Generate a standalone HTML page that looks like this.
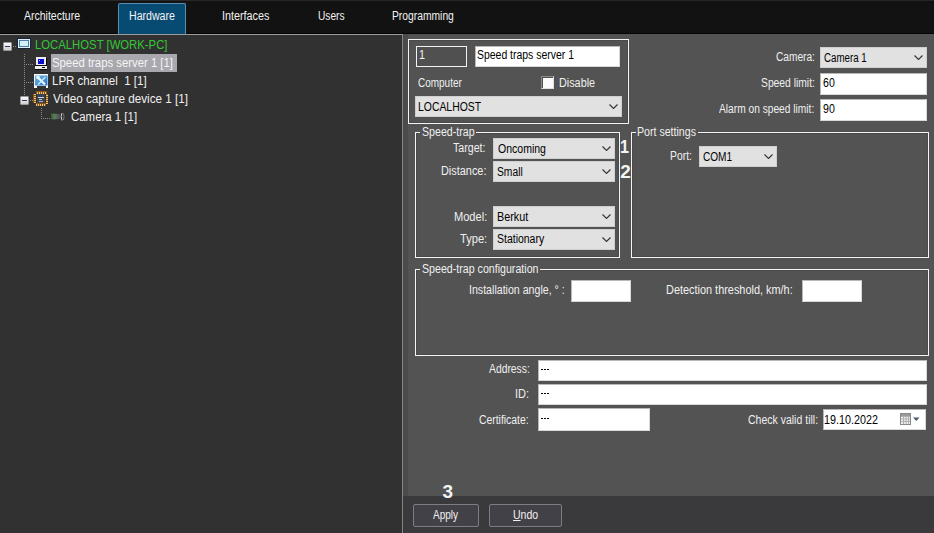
<!DOCTYPE html>
<html><head><meta charset="utf-8">
<style>
*{margin:0;padding:0;box-sizing:border-box}
html,body{width:934px;height:533px;overflow:hidden;background:#535353;font-family:"Liberation Sans",sans-serif;font-size:12px;color:#fff;position:relative}
.a{position:absolute}
.t{position:absolute;white-space:nowrap;line-height:14px;transform-origin:0 0}
.gb{position:absolute;border:1px solid #f4f4f4;box-shadow:inset 0 0 0 1px #4a4a4a}
.inp{position:absolute;background:#fff;border:1px solid;border-color:#b8b8b8 #d8d8d8 #d8d8d8 #b8b8b8}
.cmb{position:absolute;background:#e1e1e1;border:1px solid #cfcfcf}
.chev{position:absolute;width:9px;height:5px}
.gap{position:absolute;background:#535353;height:3px}
.btn{position:absolute;top:504px;height:23px;border:1px solid #7e7d83;background:#424147;border-radius:2px}
.dot{position:absolute;background-image:linear-gradient(#8c8c8c,#8c8c8c)}
.pm{position:absolute;width:9px;height:9px;border:1px solid #9a9a9a;background:linear-gradient(#fafafa,#cfcfcf);border-radius:1px}
.pm::after{content:"";position:absolute;left:1px;top:3px;width:5px;height:1px;background:#2a3a6a}
</style></head><body>
<!-- top bar -->
<div class="a" style="left:0;top:0;width:934px;height:34px;background:#121212"></div>
<div class="a" style="left:0;top:0;width:934px;height:1px;background:#262626"></div>
<div class="a" style="left:0;top:33px;width:934px;height:1px;background:#050505"></div>
<div class="a" style="left:118px;top:3px;width:68px;height:31px;background:#074a72;border:1px solid #5a8eb0;border-bottom:none;border-radius:2px 2px 0 0"></div>

<!-- left panel -->
<div class="a" style="left:0;top:34px;width:403px;height:499px;background:#313131;border-top:1px solid #9c9c9c;border-right:1px solid #858585"></div>
<div class="a" style="left:403px;top:34px;width:5px;height:462px;background:#4b4b4b"></div>

<!-- tree -->
<div class="a" style="left:51px;top:54px;width:126px;height:18px;background:#a9a8ae"></div>
<div class="pm" style="left:3px;top:42px"></div>
<div class="pm" style="left:20px;top:96px"></div>
<!-- dotted lines -->
<div class="a" style="left:13px;top:46px;width:4px;height:1px;background:repeating-linear-gradient(90deg,#8a8a8a 0 1px,transparent 1px 2px)"></div>
<div class="a" style="left:24px;top:54px;width:1px;height:41px;background:repeating-linear-gradient(#8a8a8a 0 1px,transparent 1px 2px)"></div>
<div class="a" style="left:26px;top:64px;width:8px;height:1px;background:repeating-linear-gradient(90deg,#8a8a8a 0 1px,transparent 1px 2px)"></div>
<div class="a" style="left:26px;top:82px;width:8px;height:1px;background:repeating-linear-gradient(90deg,#8a8a8a 0 1px,transparent 1px 2px)"></div>
<div class="a" style="left:30px;top:100px;width:4px;height:1px;background:repeating-linear-gradient(90deg,#8a8a8a 0 1px,transparent 1px 2px)"></div>
<div class="a" style="left:41px;top:108px;width:1px;height:11px;background:repeating-linear-gradient(#8a8a8a 0 1px,transparent 1px 2px)"></div>
<div class="a" style="left:43px;top:118px;width:8px;height:1px;background:repeating-linear-gradient(90deg,#8a8a8a 0 1px,transparent 1px 2px)"></div>
<!-- monitor icon -->
<svg class="a" style="left:17px;top:38px" width="14" height="11" viewBox="0 0 14 11" shape-rendering="crispEdges">
 <rect x="0" y="0" width="14" height="11" fill="#16243a"/>
 <rect x="1" y="1" width="12" height="9" fill="#e2f0fc"/>
 <rect x="2" y="2" width="10" height="7" fill="#4d7ea6"/>
 <rect x="3" y="3" width="8" height="5" fill="#d2f0fc"/>
</svg>
<!-- computer icon -->
<svg class="a" style="left:35px;top:57px" width="13" height="13" viewBox="0 0 13 13" shape-rendering="crispEdges">
 <rect x="1" y="0" width="10" height="8" fill="#ececf4"/>
 <rect x="3" y="2" width="6" height="5" fill="#0c0ccc"/>
 <rect x="3.5" y="2.5" width="1" height="1" fill="#c8c8ff"/>
 <rect x="11" y="1" width="1" height="7" fill="#0a0a0a"/>
 <rect x="0" y="8" width="12" height="1" fill="#0a0a0a"/>
 <rect x="0" y="9" width="12" height="3" fill="#eeeeea"/>
 <rect x="0" y="12" width="12" height="1" fill="#0a0a0a"/>
 <rect x="7" y="10" width="3" height="1" fill="#0a0a0a"/>
</svg>
<!-- LPR icon -->
<svg class="a" style="left:33px;top:73px" width="16" height="16" viewBox="0 0 16 16">
 <defs><linearGradient id="lg" x1="0" y1="0" x2="1" y2="1"><stop offset="0" stop-color="#6ab8f0"/><stop offset="1" stop-color="#2a70c0"/></linearGradient></defs>
 <rect x="1" y="1" width="14" height="14" fill="#f6f6f6"/>
 <rect x="2" y="2.5" width="12.5" height="10" fill="url(#lg)"/>
 <rect x="4" y="13" width="9" height="2" fill="#333"/>
 <path d="M5.5 5 L12 11.5" stroke="#eefaff" stroke-width="2.2"/>
 <circle cx="5" cy="4.5" r="1.8" fill="#eefaff"/>
 <path d="M12.5 4 L5 11.5" stroke="#c8f0ff" stroke-width="1.5"/>
</svg>
<!-- video chip icon -->
<svg class="a" style="left:33px;top:91px" width="16" height="16" viewBox="0 0 16 16" shape-rendering="crispEdges">
 <rect x="3" y="0" width="11" height="3" fill="#8a5410"/>
 <rect x="3" y="12" width="10" height="3" fill="#8a5410"/>
 <rect x="0" y="3" width="3" height="9" fill="#8a5410"/>
 <rect x="13" y="3" width="2" height="10" fill="#8a5410"/>
 <g fill="#e8c484">
  <rect x="4" y="1" width="1" height="2"/><rect x="6" y="1" width="1" height="2"/><rect x="8" y="1" width="1" height="2"/><rect x="10" y="1" width="1" height="2"/><rect x="12" y="1" width="1" height="2"/>
  <rect x="3" y="13" width="1" height="2"/><rect x="5" y="13" width="1" height="2"/><rect x="7" y="13" width="1" height="2"/><rect x="9" y="13" width="1" height="2"/><rect x="11" y="13" width="1" height="2"/>
  <rect x="1" y="3" width="2" height="1"/><rect x="1" y="5" width="2" height="1"/><rect x="1" y="7" width="2" height="1"/><rect x="1" y="9" width="2" height="1"/><rect x="1" y="11" width="2" height="1"/>
  <rect x="13" y="4" width="2" height="1"/><rect x="13" y="6" width="2" height="1"/><rect x="13" y="8" width="2" height="1"/><rect x="13" y="10" width="2" height="1"/><rect x="13" y="12" width="2" height="1"/>
 </g>
 <rect x="4" y="3" width="8" height="9" fill="#3c4454"/>
 <rect x="5" y="6" width="6" height="1" fill="#d0d4e0"/>
 <rect x="6" y="8" width="3" height="1" fill="#c0c4d0"/>
 <rect x="6" y="10" width="4" height="1" fill="#a8acb8"/>
</svg>
<!-- camera icon -->
<svg class="a" style="left:50px;top:112px" width="16" height="10" viewBox="0 0 16 10">
 <defs><linearGradient id="cg" x1="0" y1="0" x2="1" y2="0"><stop offset="0" stop-color="#3a5a3a"/><stop offset="0.4" stop-color="#5a805a"/><stop offset="1" stop-color="#4a4a58"/></linearGradient></defs>
 <path d="M1 1.5 L10 2 L10 7 L1 7.5 Z" fill="url(#cg)"/>
 <path d="M12 1 Q10.3 4.5 12 8.5" fill="none" stroke="#d8d8d8" stroke-width="1"/>
 <path d="M13.5 1.5 Q14.6 4.5 13.5 8" fill="none" stroke="#8a8a8a" stroke-width="0.8"/>
</svg>

<!-- bottom bar -->
<div class="a" style="left:403px;top:496px;width:531px;height:37px;background:#3a393c"></div>
<div class="btn" style="left:413px;width:66px"></div>
<div class="btn" style="left:489px;width:73px"></div>

<!-- top group -->
<div class="gb" style="left:408px;top:39px;width:221px;height:85px"></div>
<div class="a" style="left:416px;top:46px;width:51px;height:21px;border:1px solid #f2f2f2;background:#505050"></div>
<div class="inp" style="left:475px;top:46px;width:145px;height:21px"></div>
<div class="a" style="left:541px;top:76px;width:13px;height:13px;background:#fbfbfb;border-top:1px solid #8a8a8a;border-left:1px solid #8a8a8a;border-right:1px solid #e0e0e0;border-bottom:1px solid #e0e0e0;box-shadow:inset 1px 1px 0 #505050"></div>
<div class="cmb" style="left:415px;top:96px;width:207px;height:21px"></div>
<svg class="chev" style="left:609px;top:104px" viewBox="0 0 9 5"><path d="M0.5 0.5 L4.5 4.5 L8.5 0.5" stroke="#333" stroke-width="1.1" fill="none"/></svg>

<!-- right top -->
<div class="cmb" style="left:820px;top:47px;width:107px;height:21px"></div>
<svg class="chev" style="left:914px;top:55px" viewBox="0 0 9 5"><path d="M0.5 0.5 L4.5 4.5 L8.5 0.5" stroke="#333" stroke-width="1.1" fill="none"/></svg>
<div class="inp" style="left:820px;top:73px;width:107px;height:22px"></div>
<div class="inp" style="left:820px;top:99px;width:107px;height:22px"></div>

<!-- speed-trap group -->
<div class="gb" style="left:415px;top:132px;width:205px;height:126px"></div>
<div class="gap" style="left:420px;top:131px;width:56px"></div>
<div class="cmb" style="left:493px;top:138px;width:122px;height:21px"></div>
<div class="cmb" style="left:493px;top:161px;width:122px;height:21px"></div>
<div class="cmb" style="left:493px;top:206px;width:122px;height:21px"></div>
<div class="cmb" style="left:493px;top:229px;width:122px;height:21px"></div>
<svg class="chev" style="left:602px;top:146px" viewBox="0 0 9 5"><path d="M0.5 0.5 L4.5 4.5 L8.5 0.5" stroke="#333" stroke-width="1.1" fill="none"/></svg>
<svg class="chev" style="left:602px;top:169px" viewBox="0 0 9 5"><path d="M0.5 0.5 L4.5 4.5 L8.5 0.5" stroke="#333" stroke-width="1.1" fill="none"/></svg>
<svg class="chev" style="left:602px;top:214px" viewBox="0 0 9 5"><path d="M0.5 0.5 L4.5 4.5 L8.5 0.5" stroke="#333" stroke-width="1.1" fill="none"/></svg>
<svg class="chev" style="left:602px;top:237px" viewBox="0 0 9 5"><path d="M0.5 0.5 L4.5 4.5 L8.5 0.5" stroke="#333" stroke-width="1.1" fill="none"/></svg>

<!-- port settings -->
<div class="gb" style="left:631px;top:132px;width:298px;height:126px"></div>
<div class="gap" style="left:636px;top:131px;width:62px"></div>
<div class="cmb" style="left:699px;top:146px;width:78px;height:21px"></div>
<svg class="chev" style="left:764px;top:154px" viewBox="0 0 9 5"><path d="M0.5 0.5 L4.5 4.5 L8.5 0.5" stroke="#333" stroke-width="1.1" fill="none"/></svg>

<!-- config group -->
<div class="gb" style="left:415px;top:269px;width:514px;height:87px"></div>
<div class="gap" style="left:420px;top:268px;width:120px"></div>
<div class="inp" style="left:571px;top:280px;width:60px;height:22px"></div>
<div class="inp" style="left:802px;top:280px;width:60px;height:22px"></div>

<div class="inp" style="left:538px;top:360px;width:389px;height:21px"></div>
<div class="inp" style="left:538px;top:384px;width:389px;height:21px"></div>
<div class="inp" style="left:538px;top:408px;width:112px;height:23px"></div>
<div class="inp" style="left:823px;top:409px;width:103px;height:21px"></div>
<!-- calendar icon -->
<svg class="a" style="left:900px;top:413px" width="20" height="13" viewBox="0 0 20 13">
 <rect x="0.5" y="0.5" width="10" height="11" fill="#f0f0f0" stroke="#8a8a8a"/>
 <path d="M1 3.5 H10 M1 6 H10 M1 8.5 H10 M3.5 3 V11 M6 3 V11 M8.5 3 V11" stroke="#b0b0b0" stroke-width="1"/>
 <rect x="1" y="1" width="9" height="2" fill="#9a9a9a"/>
 <path d="M13 4.5 L19.5 4.5 L16.25 8 Z" fill="#4e5a6e"/>
</svg>
<!-- dashes -->
<div class="a" style="left:541px;top:369px;width:2px;height:1px;background:#000"></div>
<div class="a" style="left:544px;top:369px;width:2px;height:1px;background:#000"></div>
<div class="a" style="left:547px;top:369px;width:2px;height:1px;background:#000"></div>
<div class="a" style="left:541px;top:393px;width:2px;height:1px;background:#000"></div>
<div class="a" style="left:544px;top:393px;width:2px;height:1px;background:#000"></div>
<div class="a" style="left:547px;top:393px;width:2px;height:1px;background:#000"></div>
<div class="a" style="left:541px;top:418px;width:2px;height:1px;background:#000"></div>
<div class="a" style="left:544px;top:418px;width:2px;height:1px;background:#000"></div>
<div class="a" style="left:547px;top:418px;width:2px;height:1px;background:#000"></div>

<div class="t" id="tab1" style="left:23.9px;top:9px;font-size:12px;color:#f2f2f2;transform:scaleX(0.8746)">Architecture</div>
<div class="t" id="tab2" style="left:128.5px;top:9px;font-size:12px;color:#f4f4f4;transform:scaleX(0.8826)">Hardware</div>
<div class="t" id="tab3" style="left:222.3px;top:9px;font-size:12px;color:#f2f2f2;transform:scaleX(0.9000)">Interfaces</div>
<div class="t" id="tab4" style="left:317.5px;top:9px;font-size:12px;color:#f2f2f2;transform:scaleX(0.8475)">Users</div>
<div class="t" id="tab5" style="left:392.2px;top:9px;font-size:12px;color:#f2f2f2;transform:scaleX(0.8587)">Programming</div>
<div class="t" id="tr1" style="left:35.1px;top:38px;font-size:12px;color:#33c833;transform:scaleX(0.9431)">LOCALHOST [WORK-PC]</div>
<div class="t" id="tr2" style="left:52.1px;top:56px;font-size:12px;color:#f4f4f4;transform:scaleX(0.9445)">Speed traps server 1 [1]</div>
<div class="t" id="tr3" style="left:52.1px;top:74px;font-size:12px;color:#f0f0f0;transform:scaleX(0.9579)">LPR channel  1 [1]</div>
<div class="t" id="tr4" style="left:53.1px;top:92px;font-size:12px;color:#f0f0f0;transform:scaleX(0.9743)">Video capture device 1 [1]</div>
<div class="t" id="tr5" style="left:70.8px;top:110px;font-size:12px;color:#f0f0f0;transform:scaleX(0.9523)">Camera 1 [1]</div>
<div class="t" id="l1" style="left:417.7px;top:76px;font-size:12px;color:#f0f0f0;transform:scaleX(0.8313)">Computer</div>
<div class="t" id="l2" style="left:558.8px;top:76px;font-size:12px;color:#f0f0f0;transform:scaleX(0.9012)">Disable</div>
<div class="t" id="l3" style="left:776.1px;top:50px;font-size:12px;color:#f0f0f0;transform:scaleX(0.8458)">Camera:</div>
<div class="t" id="l4" style="left:761.0px;top:76px;font-size:12px;color:#f0f0f0;transform:scaleX(0.8591)">Speed limit:</div>
<div class="t" id="l5" style="left:718.6px;top:102px;font-size:12px;color:#f0f0f0;transform:scaleX(0.8499)">Alarm on speed limit:</div>
<div class="t" id="l6" style="left:422.2px;top:125px;font-size:12px;color:#f0f0f0;transform:scaleX(0.8848)">Speed-trap</div>
<div class="t" id="l7" style="left:453.2px;top:141px;font-size:12px;color:#f0f0f0;transform:scaleX(0.8858)">Target:</div>
<div class="t" id="l8" style="left:440.7px;top:164px;font-size:12px;color:#f0f0f0;transform:scaleX(0.9081)">Distance:</div>
<div class="t" id="l9" style="left:453.5px;top:210px;font-size:12px;color:#f0f0f0;transform:scaleX(0.9220)">Model:</div>
<div class="t" id="l10" style="left:459.5px;top:232px;font-size:12px;color:#f0f0f0;transform:scaleX(0.9267)">Type:</div>
<div class="t" id="l11" style="left:637.1px;top:125px;font-size:12px;color:#f0f0f0;transform:scaleX(0.8837)">Port settings</div>
<div class="t" id="l12" style="left:669.7px;top:149px;font-size:12px;color:#f0f0f0;transform:scaleX(0.8643)">Port:</div>
<div class="t" id="l13" style="left:421.6px;top:262px;font-size:12px;color:#f0f0f0;transform:scaleX(0.8862)">Speed-trap configuration</div>
<div class="t" id="l14" style="left:469.2px;top:283px;font-size:12px;color:#f0f0f0;transform:scaleX(0.8848)">Installation angle, ° :</div>
<div class="t" id="l15" style="left:666.1px;top:283px;font-size:12px;color:#f0f0f0;transform:scaleX(0.9090)">Detection threshold, km/h:</div>
<div class="t" id="l16" style="left:489.0px;top:362px;font-size:12px;color:#f0f0f0;transform:scaleX(0.8614)">Address:</div>
<div class="t" id="l17" style="left:514.7px;top:387px;font-size:12px;color:#f0f0f0;transform:scaleX(0.9192)">ID:</div>
<div class="t" id="l18" style="left:479.4px;top:413px;font-size:12px;color:#f0f0f0;transform:scaleX(0.8651)">Certificate:</div>
<div class="t" id="l19" style="left:748.0px;top:413px;font-size:12px;color:#f0f0f0;transform:scaleX(0.8753)">Check valid till:</div>
<div class="t" id="c1" style="left:418.5px;top:48px;font-size:12px;color:#f4f4f4;transform:scaleX(0.9000)">1</div>
<div class="t" id="c2" style="left:477.3px;top:48px;font-size:12px;color:#000;transform:scaleX(0.8705)">Speed traps server 1</div>
<div class="t" id="c3" style="left:418.4px;top:100px;font-size:12px;color:#000;transform:scaleX(0.8672)">LOCALHOST</div>
<div class="t" id="c4" style="left:824.1px;top:51px;font-size:12px;color:#000;transform:scaleX(0.8106)">Camera 1</div>
<div class="t" id="c5" style="left:823.4px;top:76px;font-size:12px;color:#000;transform:scaleX(0.8810)">60</div>
<div class="t" id="c6" style="left:823.4px;top:102px;font-size:12px;color:#000;transform:scaleX(0.8810)">90</div>
<div class="t" id="c7" style="left:498.0px;top:142px;font-size:12px;color:#000;transform:scaleX(0.8772)">Oncoming</div>
<div class="t" id="c8" style="left:497.0px;top:165px;font-size:12px;color:#000;transform:scaleX(0.8568)">Small</div>
<div class="t" id="c9" style="left:497.0px;top:210px;font-size:12px;color:#000;transform:scaleX(0.9000)">Berkut</div>
<div class="t" id="c10" style="left:497.0px;top:232px;font-size:12px;color:#000;transform:scaleX(0.8732)">Stationary</div>
<div class="t" id="c11" style="left:703.4px;top:150px;font-size:12px;color:#000;transform:scaleX(0.8386)">COM1</div>
<div class="t" id="c14" style="left:823.9px;top:413px;font-size:12px;color:#000;transform:scaleX(0.8974)">19.10.2022</div>
<div class="t" id="b1" style="left:432.9px;top:508px;font-size:12px;color:#f0f0f0;transform:scaleX(0.8346)">Apply</div>
<div class="t" id="b2" style="left:512.5px;top:508px;font-size:12px;color:#f0f0f0;transform:scaleX(0.8759)"><u>U</u>ndo</div>
<div class="t" id="n1" style="left:620.3px;top:140px;font-size:19px;color:#f4f4f4;transform:scaleX(0.8500);font-weight:700">1</div>
<div class="t" id="n2" style="left:620.3px;top:165px;font-size:19px;color:#f4f4f4;font-weight:700">2</div>
<div class="t" id="n3" style="left:442.6px;top:485px;font-size:19px;color:#f4f4f4;font-weight:700">3</div>
</body></html>
